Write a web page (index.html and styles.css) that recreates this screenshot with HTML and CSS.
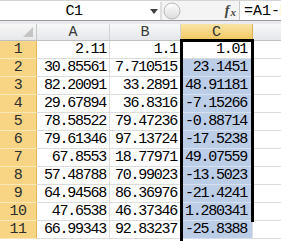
FILE: index.html
```html
<!DOCTYPE html>
<html>
<head>
<meta charset="utf-8">
<link rel="stylesheet" href="styles.css">
</head>
<body>
<div class="top">
  <div class="fbar">
    <div class="namebox">
      <span class="name">C1</span>
      <span class="arrow"><svg width="8" height="5" viewBox="0 0 8 5"><path d="M0 0H8L4 5Z" fill="#404040"/></svg></span>
    </div>
    <div class="grip"><svg width="22" height="20" viewBox="0 0 22 20"><defs><linearGradient id="g" x1="0" y1="0" x2="0" y2="1"><stop offset="0" stop-color="#fdfdfd"/><stop offset="1" stop-color="#dcdcdc"/></linearGradient></defs><path d="M1 1V19" stroke="#c8c8c8"/><circle cx="12" cy="10" r="8" fill="url(#g)" stroke="#b9b9b9"/><path d="M9 6a5 5 0 0 1 3-1.5" stroke="#fff" fill="none" stroke-width="1.5"/></svg></div>
    <div class="fx"><span class="f">f</span><span class="x">x</span></div>
    <div class="formula">=A1-B1</div>
  </div>
</div>
<div class="sheet">
  <div class="corner"><svg width="10" height="10" viewBox="0 0 10 10"><path d="M10 0V10H0Z" fill="#c4c4c4"/></svg></div>
  <div class="ch">A</div><div class="ch">B</div><div class="ch sel">C</div><div class="ch last"></div>

  <div class="rh">1</div><div class="c">2.11</div><div class="c">1.1</div><div class="c active">1.01</div><div class="c last"></div>
  <div class="rh">2</div><div class="c">30.85561</div><div class="c">7.710515</div><div class="c s">23.1451</div><div class="c last"></div>
  <div class="rh">3</div><div class="c">82.20091</div><div class="c">33.2891</div><div class="c s">48.91181</div><div class="c last"></div>
  <div class="rh">4</div><div class="c">29.67894</div><div class="c">36.8316</div><div class="c s">-7.15266</div><div class="c last"></div>
  <div class="rh">5</div><div class="c">78.58522</div><div class="c">79.47236</div><div class="c s">-0.88714</div><div class="c last"></div>
  <div class="rh">6</div><div class="c">79.61346</div><div class="c">97.13724</div><div class="c s">-17.5238</div><div class="c last"></div>
  <div class="rh">7</div><div class="c">67.8553</div><div class="c">18.77971</div><div class="c s">49.07559</div><div class="c last"></div>
  <div class="rh">8</div><div class="c">57.48788</div><div class="c">70.99023</div><div class="c s">-13.5023</div><div class="c last"></div>
  <div class="rh">9</div><div class="c">64.94568</div><div class="c">86.36976</div><div class="c s">-21.4241</div><div class="c last"></div>
  <div class="rh">10</div><div class="c">47.6538</div><div class="c">46.37346</div><div class="c s">1.280341</div><div class="c last"></div>
  <div class="rh">11</div><div class="c">66.99343</div><div class="c">92.83237</div><div class="c s">-25.8388</div><div class="c last"></div>

  <div class="selbox"></div>
  <div class="selleft"></div>
</div>
</body>
</html>
```
FILE: styles.css
```css
html, body {
  margin: 0;
  padding: 0;
  background: #fff;
  overflow: hidden;
}
body {
  width: 281px;
  height: 241px;
  font-family: "Liberation Mono", "DejaVu Sans Mono", monospace;
  font-size: 15px;
  letter-spacing: -1.25px;
  color: #000;
}
.top {
  height: 24px;
  background: #e9ebee;
  box-sizing: border-box;
}
.fbar {
  height: 21px;
  box-sizing: border-box;
  border-top: 1px solid #d4d4d4;
  border-bottom: 1px solid #9c9c9c;
  display: flex;
  background: #f4f4f4;
}
.namebox {
  width: 160px;
  background: #fff;
  display: flex;
  align-items: center;
}
.name {
  width: 148px;
  text-align: center;
  padding-top: 1px;
  letter-spacing: -0.5px;
}
.arrow {
  width: 12px;
  display: flex;
  align-items: center;
  justify-content: center;
  padding-top: 2px;
}
.grip {
  width: 22px;
  display: flex;
  align-items: center;
}
.fx {
  width: 58px;
  display: flex;
  align-items: center;
  justify-content: flex-end;
  padding-right: 3px;
  box-sizing: border-box;
  border-right: 1px solid #c9c9c9;
  font-family: "Liberation Serif", serif;
  font-style: italic;
  font-weight: bold;
  color: #444;
  letter-spacing: 0;
}
.fx .f { font-size: 14px; }
.fx .x { font-size: 11px; margin-left: 1px; margin-top: 3px; }
.formula {
  flex: 1;
  background: #fff;
  padding-left: 4px;
  display: flex;
  align-items: center;
  padding-top: 1px;
  white-space: nowrap;
  overflow: hidden;
  letter-spacing: 0;
}
.sheet {
  position: relative;
  display: grid;
  grid-template-columns: 37px 73px 71px 72px 1fr;
  grid-template-rows: 17px repeat(11, 18px);
}
.sheet > div {
  box-sizing: border-box;
}
.corner {
  background: linear-gradient(#f7f7f7, #e7e8ea);
  border-right: 1px solid #c5c5c5;
  border-bottom: 1px solid #bfbfbf;
  display: flex;
  align-items: flex-end;
  justify-content: flex-end;
  padding: 0 3px 3px 0;
}
.ch {
  background: linear-gradient(#f7f8f9, #e5e7ea);
  border-right: 1px solid #d0d2d5;
  border-bottom: 1px solid #bfc1c4;
  text-align: center;
  line-height: 17px;
  color: #3a3a3a;
  letter-spacing: 0;
}
.ch.sel {
  background: linear-gradient(#f9e4a6, #f3c75f);
  border-right: 1px solid #d9b25a;
  border-bottom: 1px solid #c9a04a;
  color: #333;
}
.ch.last { border-right: none; }
.rh {
  background: #f7d584;
  border-right: 1px solid #e2b75a;
  border-bottom: 1px solid #fbe8b8;
  text-align: center;
  line-height: 18px;
  color: #2e2e2e;
  letter-spacing: -0.5px;
}
.c {
  border-right: 1px solid #dcdcdc;
  border-bottom: 1px solid #dcdcdc;
  text-align: right;
  padding-right: 3px;
  line-height: 18px;
  white-space: nowrap;
  overflow: hidden;
}
.c.last { border-right: none; }
.c.active {
  padding-right: 5px;
}
.c.s {
  background: #bccde8;
  border-bottom-color: #d6e0f0;
  padding-right: 5px;
}
.selbox {
  position: absolute;
  left: 180px;
  top: 15px;
  width: 74px;
  height: 183px;
  border: 3px solid #000;
  border-bottom: none;
  box-sizing: border-box;
}
.selleft {
  position: absolute;
  left: 180px;
  top: 197px;
  width: 3px;
  height: 30px;
  background: #000;
}
```
